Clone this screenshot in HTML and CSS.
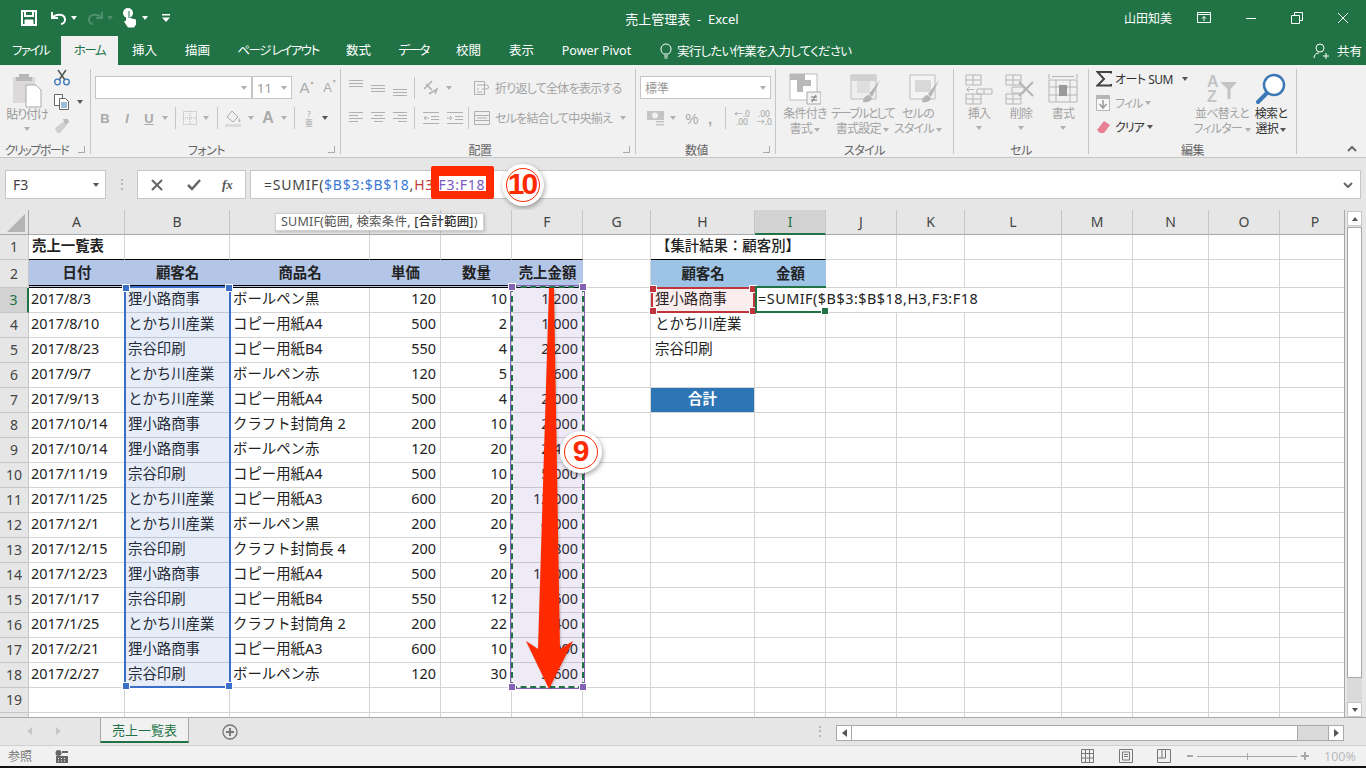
FILE: index.html
```html
<!DOCTYPE html>
<html lang="ja">
<head>
	<title>売上管理表 - Excel</title>
	<meta charset="utf-8">
	<link rel="stylesheet" href="styles.css">
</head>
<body>

	<div class="titlebar">
		<div class="quick">
			<svg class="q-save" width="18" height="18" viewBox="0 0 18 18" fill="none" stroke="#fff" stroke-width="2"><path d="M2 2h14v14H2z"/><path d="M5 2v5h8V2"/><path d="M5 16v-5h8v5" fill="#fff" stroke-width="1"/></svg>
			<svg class="q-undo" width="18" height="18" viewBox="0 0 18 18" fill="none" stroke="#fff" stroke-width="2"><path d="M2 3v6h6"/><path d="M2 9c3-4 12-5 13 1 .5 3-2 5-4 5"/></svg>
			<i class="caret white"></i>
			<svg class="q-redo" width="18" height="18" viewBox="0 0 18 18" fill="none" stroke="#4f8f6d" stroke-width="2"><path d="M16 3v6h-6"/><path d="M16 9c-3-4-12-5-13 1-.5 3 2 5 4 5"/></svg>
			<i class="caret dim"></i>
			<svg class="q-touch" width="18" height="20" viewBox="0 0 18 20" fill="#fff"><circle cx="7" cy="5" r="5"/><path d="M5 4h4v6l6 1.500v5l-2 3H7l-4-6 2-1z"/><path d="M8 3v7" stroke="#217346"/></svg>
			<i class="caret white"></i>
			<svg class="q-more" width="10" height="10" viewBox="0 0 10 10" fill="#fff"><path d="M1 1h8v1.500H1zM1 4.500h8L5 9z"/></svg>
		</div>
		<div class="doc-title">売上管理表&nbsp; - &nbsp;Excel</div>
		<div class="win">
			<span class="user">山田知美</span>
			<svg class="w-disp" width="14" height="12" viewBox="0 0 14 12" fill="none" stroke="#fff"><path d="M.5.500h13v10H.5zM.5 2.500h13M7 9V4.500M5 6.500l2-2 2 2"/></svg>
			<svg class="w-min" width="12" height="12" viewBox="0 0 12 12" stroke="#fff"><path d="M1 6.500h10"/></svg>
			<svg class="w-max" width="12" height="12" viewBox="0 0 12 12" fill="none" stroke="#fff"><path d="M.5 3.500h8v8h-8zM3.500 3.500v-3h8v8h-3"/></svg>
			<svg class="w-close" width="12" height="12" viewBox="0 0 12 12" stroke="#fff"><path d="M1 1l10 10M11 1L1 11"/></svg>
		</div>
	</div>

	<div class="tabs">
		<span class="kana">ファイル</span>
		<span class="kana active">ホーム</span>
		<span>挿入</span>
		<span>描画</span>
		<span class="kana">ページ レイアウト</span>
		<span>数式</span>
		<span class="kana">データ</span>
		<span>校閲</span>
		<span>表示</span>
		<span>Power Pivot</span>
		<div class="tell">
			<svg width="14" height="16" viewBox="0 0 14 16" fill="none" stroke="#fff"><path d="M4.500 11C3 9.500 2 8.500 2 6a5 5 0 0 1 10 0c0 2.500-1 3.500-2.500 5zM5 13h4M5.500 15h3"/></svg>
			<span>実行したい作業を入力してください</span>
		</div>
		<div class="share">
			<svg width="16" height="16" viewBox="0 0 16 16" fill="none" stroke="#fff"><circle cx="7" cy="5" r="4"/><path d="M1 15c0-3 2-5 5-5M10 13h6M13 10v6"/></svg>
			共有
		</div>
	</div>

	<div class="ribbon">

		<div class="group g-clip">
			<div class="body">
				<div class="big paste">
					<svg width="30" height="36" viewBox="0 0 30 36"><path d="M1 5h22v26H1z" fill="#dcd9da"/><path d="M7 5V2h10v3h3v4H4V5z" fill="#b9b6b7"/><path d="M14 13h10l5 5v17H14z" fill="#fff" stroke="#a9a9a9"/></svg>
					<span>貼り付け</span>
					<i class="caret"></i>
				</div>
				<div class="clip-tools">
					<svg width="16" height="17" viewBox="0 0 16 17" fill="none"><path d="M4 1l7 10M12 1L5 11" stroke="#555" stroke-width="1.500"/><circle cx="3.500" cy="13" r="2.800" stroke="#3c78b5" stroke-width="1.300"/><circle cx="12.500" cy="13" r="2.800" stroke="#3c78b5" stroke-width="1.300"/></svg>
					<div class="row-mini">
						<svg width="16" height="16" viewBox="0 0 16 16" fill="#fff" stroke="#666"><path d="M.5.500h8v11h-8z"/><path d="M5.500 4.500h6l3 3v8h-9z"/><path d="M7 9h6M7 11h6M7 13h6" stroke="#3c78b5"/></svg>
						<i class="caret dark"></i>
					</div>
					<svg width="16" height="15" viewBox="0 0 16 15"><path d="M9 1l5 0 1 3-4 4z" fill="#bdbdbd"/><path d="M1 10l8-6 3 4-6 7H3z" fill="#cfcfcf"/></svg>
				</div>
			</div>
			<div class="label"><b>クリップボード</b><i class="launch"></i></div>
		</div>

		<div class="group g-font">
			<div class="body">
				<div class="tool-row">
					<div class="combo font-name"><i class="caret"></i></div>
					<div class="combo font-size">11<i class="caret"></i></div>
					<span class="glyph a-big">A<sup>▲</sup></span>
					<span class="glyph a-small">A<sup>▼</sup></span>
				</div>
				<div class="tool-row row-two">
					<span class="glyph b">B</span>
					<span class="glyph i">I</span>
					<span class="glyph u">U</span>
					<i class="caret"></i>
					<i class="vsep"></i>
					<svg width="14" height="14" viewBox="0 0 14 14" fill="none" stroke="#b5b5b5" stroke-dasharray="1 1"><path d="M.5.500h13v13H.5zM7 0v14M0 7h14"/></svg>
					<i class="caret"></i>
					<i class="vsep"></i>
					<svg width="17" height="17" viewBox="0 0 17 17"><path d="M7 1l6 6-5 5-6-5z" fill="none" stroke="#aaa"/><path d="M14 8c1 2 2 3 1 4s-2-1-1-4z" fill="#b5b5b5"/><path d="M0 14h16v3H0z" fill="#dcdcdc"/></svg>
					<i class="caret"></i>
					<span class="glyph a-color">A</span>
					<i class="caret"></i>
					<i class="vsep"></i>
					<span class="furi">ｱ<br>亜</span>
					<i class="caret dark"></i>
				</div>
			</div>
			<div class="label"><b>フォント</b><i class="launch"></i></div>
		</div>

		<div class="group g-align">
			<div class="body">
				<div class="tool-row">
					<svg class="al" width="14" height="18" viewBox="0 0 14 18" stroke="#b0b0b0"><path d="M0 1.500h14M0 4.500h14M0 7.500h14"/></svg>
					<svg class="al" width="14" height="18" viewBox="0 0 14 18" stroke="#b0b0b0"><path d="M0 6.500h14M0 9.500h14M0 12.500h14"/></svg>
					<svg class="al" width="14" height="18" viewBox="0 0 14 18" stroke="#b0b0b0"><path d="M0 10.500h14M0 13.500h14M0 16.500h14"/></svg>
					<i class="vsep"></i>
					<svg class="al" width="18" height="16" viewBox="0 0 18 16" fill="none" stroke="#b0b0b0" stroke-width="1.500"><path d="M1 9l8-8M6 14l8-5-2 5"/><path d="M3 4l6 6"/></svg>
					<i class="caret"></i>
					<svg class="wrap-ic" width="16" height="14" viewBox="0 0 16 14" fill="none" stroke="#b0b0b0"><path d="M.5.500h10v13H.5zM3 4h10c2 0 2 4 0 4H8M3 8h2M3 11h5"/></svg>
					<span class="t">折り返して全体を表示する</span>
				</div>
				<div class="tool-row row-two">
					<svg class="al" width="14" height="14" viewBox="0 0 14 14" stroke="#b0b0b0"><path d="M0 1.500h14M0 4.500h9M0 7.500h14M0 10.500h9"/></svg>
					<svg class="al" width="14" height="14" viewBox="0 0 14 14" stroke="#b0b0b0"><path d="M0 1.500h14M3 4.500h9M0 7.500h14M3 10.500h9"/></svg>
					<svg class="al" width="14" height="14" viewBox="0 0 14 14" stroke="#b0b0b0"><path d="M0 1.500h14M5 4.500h9M0 7.500h14M5 10.500h9"/></svg>
					<i class="vsep"></i>
					<svg class="al" width="16" height="14" viewBox="0 0 16 14" fill="none" stroke="#b0b0b0"><path d="M0 1.500h16M8 5.500h8M8 8.500h8M0 12.500h16M6 7H1M3 5L1 7l2 2"/></svg>
					<svg class="al" width="16" height="14" viewBox="0 0 16 14" fill="none" stroke="#b0b0b0"><path d="M0 1.500h16M8 5.500h8M8 8.500h8M0 12.500h16M0 7h5M3 5l2 2-2 2"/></svg>
					<i class="vsep v2"></i>
					<svg class="wrap-ic" width="16" height="14" viewBox="0 0 16 14" fill="none" stroke="#b0b0b0"><path d="M.5.500h15v13H.5zM0 4.500h16M0 9.500h16M3 7h10"/></svg>
					<span class="t">セルを結合して中央揃え</span>
					<i class="caret"></i>
				</div>
			</div>
			<div class="label"><b>配置</b><i class="launch"></i></div>
		</div>

		<div class="group g-num">
			<div class="body">
				<div class="tool-row">
					<div class="combo num-format">標準<i class="caret"></i></div>
				</div>
				<div class="tool-row row-two">
					<svg width="17" height="15" viewBox="0 0 17 15"><path d="M0 0h17v9H0z" fill="#c4c4c4"/><circle cx="8" cy="4.500" r="3" fill="#f1f1f1"/><path d="M9 10h8v1.500H9zM9 13h8v1.500H9z" fill="#c4c4c4"/></svg>
					<i class="caret"></i>
					<span class="glyph pct">%</span>
					<span class="glyph comma">,</span>
					<i class="vsep"></i>
					<span class="dec">←.0<br>.00</span>
					<span class="dec">.00<br>→.0</span>
				</div>
			</div>
			<div class="label"><b>数値</b><i class="launch"></i></div>
		</div>

		<div class="group g-style">
			<div class="body">
				<div class="big b1">
					<svg width="32" height="32" viewBox="0 0 32 32"><path d="M1 1h27v26H1z" fill="#fff" stroke="#bdbdbd"/><path d="M1 1h15v6H1zM8 7h14v6H8zM8 13h6v6H8z" fill="#b9b9b9"/><path d="M18 19h14v12H18z" fill="#f1f1f1" stroke="#aaa"/><path d="M22 24h6M22 27h6M27 22l-4 7" stroke="#777"/></svg>
					<span>条件付き<br>書式 <i class="caret"></i></span>
				</div>
				<div class="big b2">
					<svg width="32" height="32" viewBox="0 0 32 32"><path d="M1 2h25v24H1z" fill="#eee" stroke="#bdbdbd"/><path d="M1 2h25v6H1z" fill="#d0d0d0"/><path d="M7 8h13v12H7z" fill="#dedede"/><path d="M30 7L19 21l3 3zM19 22c-3 0-6 3-6 7 4 1 9-1 9-4z" fill="#b5b5b5"/></svg>
					<span><em>テーブルとして</em><br>書式設定 <i class="caret"></i></span>
				</div>
				<div class="big b3">
					<svg width="32" height="32" viewBox="0 0 32 32"><path d="M1 2h25v24H1z" fill="#f4f4f4" stroke="#bdbdbd"/><path d="M6 7h16v12H6z" fill="#d8d8d8"/><path d="M30 7L19 21l3 3zM19 22c-3 0-6 3-6 7 4 1 9-1 9-4z" fill="#b5b5b5"/></svg>
					<span>セルの<br>スタイル <i class="caret"></i></span>
				</div>
			</div>
			<div class="label"><b>スタイル</b></div>
		</div>

		<div class="group g-cell">
			<div class="body">
				<div class="big">
					<svg width="28" height="32" viewBox="0 0 28 32" fill="none" stroke="#b5b5b5"><path d="M1 2h15v10H1zM8 2v10M1 7h15M1 21h15v10H1zM8 21v10M1 26h15M12 16h15v5H12zM19 16v5M9 16.500H2M4 14l-2 2.500L4 19" /></svg>
					<span>挿入</span>
					<i class="caret"></i>
				</div>
				<div class="big">
					<svg width="32" height="32" viewBox="0 0 32 32" fill="none" stroke="#b5b5b5"><path d="M1 2h15v10H1zM8 2v10M1 7h15M1 21h15v10H1zM8 21v10M1 26h15M7 14h12v6H7z"/><path d="M14 9l14 14M28 9L14 23" stroke-width="2"/></svg>
					<span>削除</span>
					<i class="caret"></i>
				</div>
				<div class="big">
					<svg width="30" height="32" viewBox="0 0 30 32" fill="none" stroke="#b5b5b5"><path d="M1 7h28v22H1zM8 7v22M22 7v22M1 14h28M1 22h28M1 1v5M29 1v5M4 3.500h22"/><path d="M11 12h8v11h-8z" fill="#999" stroke="none"/></svg>
					<span>書式</span>
					<i class="caret"></i>
				</div>
			</div>
			<div class="label"><b>セル</b></div>
		</div>

		<div class="group g-edit">
			<div class="body">
				<div class="edit-col">
					<div class="edit-row dark">
						<svg width="16" height="16" viewBox="0 0 16 16" fill="none" stroke="#444" stroke-width="2"><path d="M15 2.500V1H1.500L8 8l-6.500 6.500H15V13"/></svg>
						<span class="sum">オート SUM</span>
						<i class="caret dark"></i>
					</div>
					<div class="edit-row">
						<svg width="14" height="16" viewBox="0 0 14 16"><path d="M.5.500h13v15H.5z" fill="#f8f8f8" stroke="#b5b5b5"/><path d="M1 1h12v3H1z" fill="#b5b5b5"/><path d="M7 5v8M3.500 9L7 13l3.500-4" fill="none" stroke="#999" stroke-width="1.500"/></svg>
						<span>フィル</span>
						<i class="caret"></i>
					</div>
					<div class="edit-row dark">
						<svg width="14" height="14" viewBox="0 0 14 14"><path d="M8 1l6 4-6 8H4L1 10z" fill="#e87f93"/></svg>
						<span>クリア</span>
						<i class="caret dark"></i>
					</div>
				</div>
				<div class="big sort">
					<svg width="32" height="32" viewBox="0 0 32 32"><text x="1" y="14" class="az">A</text><text x="1" y="29" class="az">Z</text><path d="M14 9h17l-6.500 7v10h-3V16z" fill="#c4c4c4"/></svg>
					<span>並べ替えと<br>フィルター <i class="caret"></i></span>
				</div>
				<div class="big find">
					<svg width="32" height="32" viewBox="0 0 32 32" fill="none"><circle cx="19" cy="12" r="10" fill="#fff" stroke="#3c78b5" stroke-width="2.500"/><path d="M12 20L3 29" stroke="#3c78b5" stroke-width="4" stroke-linecap="round"/></svg>
					<span>検索と<br>選択 <i class="caret dark"></i></span>
				</div>
			</div>
			<div class="label"><b>編集</b></div>
		</div>

		<div class="collapse">
			<svg width="10" height="6" viewBox="0 0 10 6" fill="none" stroke="#666" stroke-width="2"><path d="M1 5l4-4 4 4"/></svg>
		</div>
	</div>

	<div class="fbar">
		<div class="namebox">F3<i class="caret dark"></i></div>
		<div class="fdots">⋮</div>
		<div class="fbuttons">
			<svg width="12" height="12" viewBox="0 0 12 12" stroke="#666" stroke-width="2"><path d="M1 1l10 10M11 1L1 11"/></svg>
			<svg width="14" height="12" viewBox="0 0 14 12" fill="none" stroke="#666" stroke-width="2.500"><path d="M1 6l4 4 8-9"/></svg>
			<span class="fx">fx</span>
		</div>
		<div class="finput">
			<span class="ftext">=SUMIF(<span class="c-blue">$B$3:$B$18</span>,<span class="c-red">H3</span>,<span class="c-purple">F3:F18</span></span>
			<svg width="10" height="6" viewBox="0 0 10 6" fill="none" stroke="#666" stroke-width="2"><path d="M1 1l4 4 4-4"/></svg>
		</div>
		<div class="red-box"></div>
		<div class="badge badge-10"><span>10</span></div>
	</div>

	<div class="sheet">
		<div class="grid-wrap">
			<table class="cells">
				<colgroup>
					<col class="c-head"><col class="c-a"><col class="c-b"><col class="c-c"><col class="c-n"><col class="c-n"><col class="c-n"><col class="c-g"><col class="c-h"><col class="c-n"><col class="c-n"><col class="c-k"><col class="c-l"><col class="c-n"><col class="c-m"><col class="c-n"><col class="c-n">
				</colgroup>
				<tr class="head">
					<th class="corner"><svg width="20" height="20" viewBox="0 0 20 20"><path d="M19 1v18H1z" fill="#b4b4b4"/></svg></th>
					<th>A</th><th>B</th><th>C</th><th>D</th><th>E</th><th>F</th><th>G</th><th>H</th><th class="on">I</th><th>J</th><th>K</th><th>L</th><th>M</th><th>N</th><th>O</th><th>P</th>
				</tr>
				<tr>
					<th>1</th><td class="bold over">売上一覧表</td><td class="over"></td><td class="over"></td><td class="over"></td><td class="over"></td><td class="over"></td><td></td><td colspan="2" class="bold over title2">【集計結果：顧客別】</td><td></td><td></td><td></td><td></td><td></td><td></td><td></td>
				</tr>
				<tr class="r2">
					<th>2</th><td class="hd">日付</td><td class="hd">顧客名</td><td class="hd">商品名</td><td class="hd">単価</td><td class="hd">数量</td><td class="hd">売上金額</td><td class="plain"></td><td class="hd2">顧客名</td><td class="hd2">金額</td><td></td><td></td><td></td><td></td><td></td><td></td><td></td>
				</tr>
				<tr>
					<th class="on">3</th><td>2017/8/3</td><td>狸小路商事</td><td>ボールペン黒</td><td class="n">120</td><td class="n">10</td><td class="n">1,200</td><td></td><td>狸小路商事</td><td colspan="4" class="formula">=SUMIF($B$3:$B$18,H3,F3:F18</td><td></td><td></td><td></td><td></td>
				</tr>
				<tr>
					<th>4</th><td>2017/8/10</td><td>とかち川産業</td><td>コピー用紙A4</td><td class="n">500</td><td class="n">2</td><td class="n">1,000</td><td></td><td>とかち川産業</td><td></td><td></td><td></td><td></td><td></td><td></td><td></td><td></td>
				</tr>
				<tr>
					<th>5</th><td>2017/8/23</td><td>宗谷印刷</td><td>コピー用紙B4</td><td class="n">550</td><td class="n">4</td><td class="n">2,200</td><td></td><td>宗谷印刷</td><td></td><td></td><td></td><td></td><td></td><td></td><td></td><td></td>
				</tr>
				<tr>
					<th>6</th><td>2017/9/7</td><td>とかち川産業</td><td>ボールペン赤</td><td class="n">120</td><td class="n">5</td><td class="n">600</td><td></td><td></td><td></td><td></td><td></td><td></td><td></td><td></td><td></td><td></td>
				</tr>
				<tr>
					<th>7</th><td>2017/9/13</td><td>とかち川産業</td><td>コピー用紙A4</td><td class="n">500</td><td class="n">4</td><td class="n">2,000</td><td></td><td class="total">合計</td><td></td><td></td><td></td><td></td><td></td><td></td><td></td><td></td>
				</tr>
				<tr>
					<th>8</th><td>2017/10/14</td><td>狸小路商事</td><td>クラフト封筒角 2</td><td class="n">200</td><td class="n">10</td><td class="n">2,000</td><td></td><td></td><td></td><td></td><td></td><td></td><td></td><td></td><td></td><td></td>
				</tr>
				<tr>
					<th>9</th><td>2017/10/14</td><td>狸小路商事</td><td>ボールペン赤</td><td class="n">120</td><td class="n">20</td><td class="n">2,400</td><td></td><td></td><td></td><td></td><td></td><td></td><td></td><td></td><td></td><td></td>
				</tr>
				<tr>
					<th>10</th><td>2017/11/19</td><td>宗谷印刷</td><td>コピー用紙A4</td><td class="n">500</td><td class="n">10</td><td class="n">5,000</td><td></td><td></td><td></td><td></td><td></td><td></td><td></td><td></td><td></td><td></td>
				</tr>
				<tr>
					<th>11</th><td>2017/11/25</td><td>とかち川産業</td><td>コピー用紙A3</td><td class="n">600</td><td class="n">20</td><td class="n">12,000</td><td></td><td></td><td></td><td></td><td></td><td></td><td></td><td></td><td></td><td></td>
				</tr>
				<tr>
					<th>12</th><td>2017/12/1</td><td>とかち川産業</td><td>ボールペン黒</td><td class="n">200</td><td class="n">20</td><td class="n">4,000</td><td></td><td></td><td></td><td></td><td></td><td></td><td></td><td></td><td></td><td></td>
				</tr>
				<tr>
					<th>13</th><td>2017/12/15</td><td>宗谷印刷</td><td>クラフト封筒長 4</td><td class="n">200</td><td class="n">9</td><td class="n">1,800</td><td></td><td></td><td></td><td></td><td></td><td></td><td></td><td></td><td></td><td></td>
				</tr>
				<tr>
					<th>14</th><td>2017/12/23</td><td>狸小路商事</td><td>コピー用紙A4</td><td class="n">500</td><td class="n">20</td><td class="n">10,000</td><td></td><td></td><td></td><td></td><td></td><td></td><td></td><td></td><td></td><td></td>
				</tr>
				<tr>
					<th>15</th><td>2017/1/17</td><td>宗谷印刷</td><td>コピー用紙B4</td><td class="n">550</td><td class="n">12</td><td class="n">6,600</td><td></td><td></td><td></td><td></td><td></td><td></td><td></td><td></td><td></td><td></td>
				</tr>
				<tr>
					<th>16</th><td>2017/1/25</td><td>とかち川産業</td><td>クラフト封筒角 2</td><td class="n">200</td><td class="n">22</td><td class="n">4,400</td><td></td><td></td><td></td><td></td><td></td><td></td><td></td><td></td><td></td><td></td>
				</tr>
				<tr>
					<th>17</th><td>2017/2/21</td><td>狸小路商事</td><td>コピー用紙A3</td><td class="n">600</td><td class="n">10</td><td class="n">6,000</td><td></td><td></td><td></td><td></td><td></td><td></td><td></td><td></td><td></td><td></td>
				</tr>
				<tr>
					<th>18</th><td>2017/2/27</td><td>宗谷印刷</td><td>ボールペン赤</td><td class="n">120</td><td class="n">30</td><td class="n">3,600</td><td></td><td></td><td></td><td></td><td></td><td></td><td></td><td></td><td></td><td></td>
				</tr>
				<tr>
					<th>19</th><td></td><td></td><td></td><td></td><td></td><td></td><td></td><td></td><td></td><td></td><td></td><td></td><td></td><td></td><td></td><td></td>
				</tr>
				<tr>
					<th></th><td></td><td></td><td></td><td></td><td></td><td></td><td></td><td></td><td></td><td></td><td></td><td></td><td></td><td></td><td></td><td></td>
				</tr>
			</table>

			<div class="sel sel-b"><i class="h tl"></i><i class="h tr"></i><i class="h bl"></i><i class="h br"></i></div>
			<div class="sel sel-f"><i class="h tl"></i><i class="h tr"></i><i class="h bl"></i><i class="h br"></i></div>
			<div class="sel sel-h"><i class="h tl"></i><i class="h tr"></i><i class="h bl"></i><i class="h br"></i></div>
			<div class="sel sel-i"><i class="h br"></i></div>

			<div class="tooltip">SUMIF(範囲, 検索条件, <b>[合計範囲]</b>)</div>
			<svg class="arrow" width="60" height="410" viewBox="0 0 60 410"><path d="M23 2h5l6 361 13-8-24 48-23-48 12 8z" fill="#ff2a00"/></svg>
			<div class="badge badge-9"><span>9</span></div>
		</div>

		<div class="vscroll">
			<div class="sb-btn"><i class="caret up"></i></div>
			<div class="sb-thumb"></div>
			<div class="sb-track"></div>
			<div class="sb-btn"><i class="caret dark"></i></div>
		</div>
	</div>

	<div class="sheetbar">
		<div class="nav"><i class="tri left"></i><i class="tri right"></i></div>
		<div class="sheet-tab">売上一覧表</div>
		<svg class="add" width="16" height="16" viewBox="0 0 16 16" fill="none" stroke="#777"><circle cx="8" cy="8" r="7" stroke-width="1.300"/><path d="M8 4v8M4 8h8" stroke-width="2"/></svg>
		<div class="hdots">⋮</div>
		<div class="hscroll">
			<div class="hs-btn"><i class="tri left dark"></i></div>
			<div class="hs-thumb"></div>
			<div class="hs-track"></div>
			<div class="hs-btn"><i class="tri right dark"></i></div>
		</div>
	</div>

	<div class="status">
		<span class="st-text">参照</span>
		<svg class="st-macro" width="13" height="13" viewBox="0 0 13 13" fill="#666"><circle cx="3.500" cy="3" r="3"/><path d="M7 1h6v2H7zM1 6h12v7H1z"/><path d="M3 8h1v1H3zM6 8h1v1H6zM9 8h1v1H9zM3 10.500h1v1H3zM6 10.500h1v1H6zM9 10.500h1v1H9z" fill="#f1f1f1"/></svg>
		<div class="views">
			<svg width="14" height="14" viewBox="0 0 14 14" fill="none" stroke="#777"><path d="M.5.500h12v13H.5zM4.500 0v14M8.500 0v14M0 4.500h13M0 9h13"/></svg>
			<svg width="14" height="14" viewBox="0 0 14 14" fill="none" stroke="#777"><path d="M.5.500h13v13H.5zM3.500 3h7v8h-7zM5 5.500h4M5 7.500h4"/></svg>
			<svg width="14" height="14" viewBox="0 0 14 14" fill="none" stroke="#777"><path d="M.5.500h13v13H.5zM.5 9h8V.5M5 0v9"/></svg>
		</div>
		<div class="zoom">
			<i class="z-minus"></i>
			<div class="z-track"><i></i></div>
			<svg width="8" height="8" viewBox="0 0 8 8" stroke="#a8a8a8" stroke-width="2"><path d="M0 4h8M4 0v8"/></svg>
			<span>100%</span>
		</div>
	</div>

</body>
</html>
```

FILE: styles.css
```css
* {
	box-sizing: border-box;
}

body {
	margin: 0px;
	height: 768px;
	overflow: hidden;
	background: #111;
	font-family: "Noto Sans", "Noto Sans CJK JP", sans-serif;
	font-size: 12px;
	color: #444;
}

svg {
	display: block;
	flex: none;
}

i, em {
	font-style: normal;
}

/* little dropdown triangle used everywhere */
.caret {
	display: inline-block;
	flex: none;
	width: 0px;
	height: 0px;
	border-left: 3.500px solid transparent;
	border-right: 3.500px solid transparent;
	border-top: 4px solid #b0b0b0;
	vertical-align: middle;
}
.caret.white { border-top-color: #fff; }
.caret.dim { border-top-color: #4f8f6d; }
.caret.dark { border-top-color: #555; }
.caret.up {
	border-top: 0px;
	border-bottom: 4px solid #555;
}

/* title bar */
.titlebar {
	height: 36px;
	background: #217346;
	color: #fff;
	display: flex;
	align-items: center;
	position: relative;
}

.quick {
	display: flex;
	align-items: center;
	padding-left: 20px;
	width: 300px;
}
.q-undo { margin-left: 12px; }
.quick .caret { margin-left: 3px; }
.q-redo { margin-left: 9px; }
.q-touch { margin-left: 8px; }
.q-more { margin-left: 13px; }

.doc-title {
	flex: 1;
	text-align: center;
	font-size: 13px;
	margin-left: -2px;
}

.win {
	width: 300px;
	display: flex;
	align-items: center;
	justify-content: flex-end;
}
.user { font-size: 12px; margin-right: 25px; }
.w-disp { margin-right: 34px; }
.w-min { margin-right: 34px; }
.w-max { margin-right: 34px; }
.w-close { margin-right: 17px; }

/* ribbon tabs */
.tabs {
	height: 29px;
	background: #217346;
	color: #fff;
	display: grid;
	grid-template-columns: 61px 57px 53px 53px 108px 53px 57px 53px 53px 97px 215px 1fr auto;
	align-items: center;
	font-size: 12.500px;
	font-feature-settings: "palt";
}
.tabs > span {
	text-align: center;
	line-height: 29px;
	white-space: nowrap;
}
.tabs > span.kana {
	letter-spacing: -1.500px;
}
.tabs > span.active {
	background: #f1f1f1;
	color: #217346;
}
.tell {
	display: flex;
	align-items: center;
	gap: 4px;
	padding-left: 14px;
	white-space: nowrap;
	letter-spacing: -0.750px;
}
.share {
	grid-column: 13;
	display: flex;
	align-items: center;
	gap: 8px;
	padding-right: 4px;
}

/* ribbon */
.ribbon {
	height: 93px;
	background: #f1f1f1;
	border-bottom: 1px solid #c6c6c6;
	display: flex;
	padding-top: 4px;
	font-feature-settings: "palt";
	color: #a3a3a3;
}

.group {
	height: 85px;
	border-right: 1px solid #c6c6c6;
	display: flex;
	flex-direction: column;
}
.g-clip { width: 91px; }
.g-font { width: 250px; }
.g-align { width: 295px; }
.g-num { width: 140px; }
.g-style { width: 178px; }
.g-cell { width: 135px; }
.g-edit { width: 208px; }

.body {
	height: 72px;
	flex: none;
}

.label {
	height: 16px;
	margin-bottom: -5px;
	margin-top: 2px;
	line-height: 16px;
	text-align: center;
	position: relative;
}
.label b {
	font-weight: normal;
	color: #666;
	letter-spacing: -0.500px;
}
.g-clip .label { padding-right: 17px; }
.g-clip .label b { letter-spacing: -1.500px; }
.g-font .label { padding-right: 18px; }
.g-align .label { padding-right: 16px; }
.g-num .label { padding-right: 18px; }
.launch {
	position: absolute;
	right: 5px;
	top: 3px;
	width: 7px;
	height: 7px;
	border-right: 1px solid #aaa;
	border-bottom: 1px solid #aaa;
}

.g-font .body,
.g-align .body,
.g-num .body {
	padding-top: 7px;
	padding-left: 4px;
}

.tool-row {
	display: flex;
	align-items: center;
	height: 23px;
}
.row-two {
	height: 22px;
	margin-top: 8px;
}

.vsep {
	width: 1px;
	height: 22px;
	background: #c6c6c6;
	flex: none;
}

.combo {
	height: 23px;
	background: #fff;
	border: 1px solid #c6c6c6;
	display: flex;
	align-items: center;
	justify-content: space-between;
	padding: 0px 4px;
	color: #999;
}
.font-name { width: 157px; justify-content: flex-end; }
.font-size { width: 40px; font-size: 13px; }
.num-format { width: 131px; }

.glyph {
	font-family: "Liberation Sans", sans-serif;
	color: #aaa;
	text-align: center;
}
.a-big { font-size: 15px; margin-left: 5px; width: 20px; }
.a-small { font-size: 13px; margin-left: 3px; width: 20px; }
.glyph sup { font-size: 5px; vertical-align: 9px; line-height: 0px; }

.g-font .row-two .glyph { font-size: 13px; }
.g-font .b { font-weight: bold; width: 14px; margin-left: 3px; }
.g-font .i { font-style: italic; font-weight: bold; width: 14px; margin-left: 8px; }
.g-font .u { text-decoration: underline; font-weight: bold; width: 14px; margin-left: 8px; }
.g-font .row-two .caret { margin-left: 6px; }
.g-font .row-two .vsep { margin: 0px 7px; }
.g-font .row-two svg + .caret { margin-left: 6px; margin-right: 1px; }
.g-font .row-two .a-color { font-size: 16px; margin-left: 6px; width: 14px; font-weight: bold; }
.furi {
	font-size: 8px;
	line-height: 9px;
	text-align: center;
	width: 14px;
}

.g-align .body { padding-left: 8px; }
.g-align .al { margin-right: 8px; }
.g-align .vsep { margin-right: 8px; margin-left: -1px; }
.g-align .vsep.v2 { margin-left: -3px; }
.g-align .t { margin-left: 5px; white-space: nowrap; letter-spacing: -0.750px; }
.g-align .caret { margin-left: 3px; }
.g-align .row-two .caret { margin-left: 8px; }
.g-align .wrap-ic { margin-left: 22px; }
.g-align .row-two .wrap-ic { margin-left: -3px; }
.g-align .tool-row .al + .caret { margin-left: -3px; }

.g-num .row-two { padding-left: 7px; }
.g-num .row-two .caret { margin-left: 6px; }
.pct { font-size: 15px; margin-left: 8px; width: 16px; }
.comma { font-size: 15px; font-weight: bold; margin-left: 5px; width: 10px; margin-right: 10px; }
.dec {
	font-size: 8.500px;
	line-height: 8px;
	width: 22px;
	text-align: center;
	margin-left: 5px;
	white-space: nowrap;
}
.dec + .dec { margin-left: 0px; }

/* big buttons, icon with the text below */
.big {
	display: flex;
	flex-direction: column;
	align-items: center;
	padding-top: 4px;
	text-align: center;
	line-height: 15px;
	white-space: nowrap;
	letter-spacing: -0.750px;
}
.big svg { height: 32px; margin-bottom: 1px; }
.big > span { display: block; }
.big > .caret { margin-top: 5px; }
.big em { letter-spacing: -1.700px; }

.g-clip .body { display: flex; }
.paste { width: 54px; padding-top: 3px; }
.paste svg { height: 36px; margin-bottom: -1px; }
.paste > span { color: #999; letter-spacing: -1px; }
.clip-tools {
	display: flex;
	flex-direction: column;
	padding-top: 0px;
	gap: 8px;
}
.row-mini {
	display: flex;
	align-items: center;
	gap: 7px;
}

.g-style .body,
.g-cell .body,
.g-edit .body { display: flex; }
.g-style .body { padding-left: 2px; }
.b1 { width: 54px; }
.b2 { width: 56px; padding-left: 5px; }
.b3 { width: 60px; }
.b2 svg { margin-left: 6px; }
.b3 svg { margin-left: 14px; }
.g-cell .body { padding-left: 4px; }
.g-cell .big { width: 42px; }

.edit-col {
	width: 109px;
	padding-left: 7px;
	margin-top: -2px;
	letter-spacing: -1px;
}
.edit-row {
	display: flex;
	align-items: center;
	height: 24px;
	gap: 3px;
}
.edit-row svg { margin-right: 2px; }
.edit-row:first-child svg { margin-right: 0px; }
.edit-row.dark { color: #333; }
.sum { margin-right: 6px; letter-spacing: -0.500px; }
.sort { width: 48px; }
.find { width: 50px; color: #333; }
.az {
	font-family: "Liberation Sans", sans-serif;
	font-size: 16px;
	font-weight: bold;
	fill: #c4c4c4;
}

.collapse {
	margin-left: auto;
	align-self: flex-end;
	padding-right: 9px;
	padding-bottom: 5px;
}

/* formula bar */
.fbar {
	height: 52px;
	background: #e6e6e6;
	display: flex;
	padding-top: 12px;
	padding-left: 5px;
	position: relative;
}
.fbar > div { height: 29px; }

.namebox {
	width: 101px;
	background: #fff;
	border: 1px solid #c6c6c6;
	display: flex;
	align-items: center;
	justify-content: space-between;
	padding: 0px 6px 0px 7px;
	font-size: 14px;
	color: #444;
}
.fdots {
	width: 31px;
	text-align: center;
	line-height: 28px;
	color: #aaa;
	font-size: 14px;
}
.fbuttons {
	width: 109px;
	background: #fff;
	border: 1px solid #c6c6c6;
	display: flex;
	align-items: center;
	gap: 24px;
	padding-left: 13px;
}
.fx {
	font-family: "Liberation Serif", serif;
	font-style: italic;
	font-weight: bold;
	font-size: 13px;
	color: #555;
	margin-left: -3px;
}
.finput {
	width: 1111px;
	margin-left: 4px;
	background: #fff;
	border: 1px solid #c6c6c6;
	display: flex;
	align-items: center;
	justify-content: space-between;
	padding: 0px 7px 0px 13px;
	font-size: 14px;
	color: #444;
	white-space: nowrap;
}
.ftext { letter-spacing: 0.750px; }
.c-blue { color: #3b78d8; }
.c-red { color: #c23b3b; }
.c-purple { color: #7e57c2; }

.red-box {
	position: absolute;
	left: 431px;
	top: 8px;
	width: 63px;
	height: 33px !important;
	border: solid #ff2a00;
	border-width: 10px 8px 8px 8px;
	border-radius: 2px;
}

.badge {
	position: absolute;
	width: 42px;
	height: 42px !important;
	border-radius: 50%;
	background: #fff;
	box-shadow: 1px 2px 5px rgba(0,0,0,0.35);
	display: flex;
	align-items: center;
	justify-content: center;
}
.badge span {
	width: 34px;
	height: 34px;
	border-radius: 50%;
	border: 1.500px solid #ff2a00;
	color: #ff2a00;
	font-family: "Liberation Sans", sans-serif;
	font-weight: bold;
	text-align: center;
	font-size: 30px;
	line-height: 30px;
}
.badge-10 { left: 502px; top: 6px; }
.badge-10 span { letter-spacing: -3px; padding-right: 3px; }
.badge-9 { left: 560px; top: 221px; }

/* the sheet */
.sheet {
	height: 507px;
	display: flex;
	background: #e6e6e6;
}

.grid-wrap {
	width: 1345px;
	height: 507px;
	overflow: hidden;
	position: relative;
	background: #fff;
	border-right: 1px solid #a8a8a8;
}

.cells {
	table-layout: fixed;
	width: 1351px;
	border-collapse: separate;
	border-spacing: 0px;
	font-size: 14.400px;
	color: #222;
}
.c-head { width: 29px; }
.c-a { width: 96px; }
.c-b { width: 105px; }
.c-c { width: 140px; }
.c-n { width: 71px; }
.c-g { width: 68px; }
.c-h { width: 104px; }
.c-k { width: 68px; }
.c-l { width: 97px; }
.c-m { width: 76px; }

.cells tr { height: 25px; }
.cells tr.r2 { height: 28px; }

.cells td, .cells th {
	white-space: nowrap;
	border-right: 1px solid #d4d4d4;
	border-bottom: 1px solid #d4d4d4;
	line-height: 20px;
	overflow: visible;
}
.cells td {
	padding: 0px 4px 3px 3px;
}
.cells td:nth-child(2) { padding-left: 2px; }
.cells td:nth-child(9) { padding-left: 4px; }
.cells th {
	background: #e6e6e6;
	font-weight: normal;
	text-align: center;
	color: #444;
	font-size: 14px;
	padding: 0px;
	border-color: #c6c6c6;
}
.cells .head th {
	border-bottom: 1px solid #a8a8a8;
	border-right-color: #c6c6c6;
}
.cells th.corner { padding: 2px 0px 0px 6px; border-right-color: #a8a8a8; }
.cells th.on {
	background: #d2d2d2;
	color: #217346;
}
.cells .head th.on { border-bottom: 2px solid #217346; }
.cells tr > th.on:first-child { border-right: 2px solid #217346; }

.cells td.n { text-align: right; }
.cells td.bold { font-weight: bold; padding-left: 3px; }
.cells td.over { border-bottom-color: #000; }
.cells td.title2 { border-bottom-color: #000; padding-left: 5px; font-weight: 500; }

.cells td.hd, .cells td.hd2 {
	background: #b4c6e7;
	font-weight: bold;
	text-align: center;
	border-right: 0px;
	border-bottom: 3px double #000;
	padding: 0px;
}
.cells td.hd2 { background: #9dc3e6; border-bottom: 1px solid #2e6aa8; }
.cells td.plain { border-bottom-color: #d4d4d4; }
.cells td.formula { padding-left: 3px; letter-spacing: 0.500px; }
.cells td.total {
	background: #2e75b6;
	color: #fff;
	font-weight: bold;
	text-align: center;
	padding: 0px 0px 3px 0px;
}

/* range outlines, they sit on top of the table */
.sel {
	position: absolute;
}
.sel .h {
	position: absolute;
	width: 8px;
	height: 8px;
	border: 1px solid #fff;
}
.sel .tl { left: -4px; top: -4px; }
.sel .tr { right: -4px; top: -4px; }
.sel .bl { left: -4px; bottom: -4px; }
.sel .br { right: -4px; bottom: -4px; }

.sel-b {
	left: 124px;
	top: 76px;
	width: 107px;
	height: 402px;
	border: 2px solid #3a6fc9;
	background: rgba(58,111,201,0.13);
}
.sel-b .h { background: #3a6fc9; }

.sel-f {
	left: 511px;
	top: 76px;
	width: 73px;
	height: 402px;
	border: 2px dashed #217346;
	outline: 1px solid #8461b7;
	background: rgba(132,97,183,0.13);
	background-clip: padding-box;
}
.sel-f .h { background: #8461b7; }
.sel-f .tl { left: -5px; top: -5px; }
.sel-f .tr { right: -5px; top: -5px; }
.sel-f .bl { left: -5px; bottom: -5px; }
.sel-f .br { right: -5px; bottom: -5px; }

.sel-h {
	left: 651px;
	top: 77px;
	width: 104px;
	height: 26px;
	border: 2px solid #c0343c;
	background: rgba(192,52,60,0.09);
}
.sel-h .h { background: #c0343c; }

.sel-i {
	left: 755px;
	top: 76px;
	width: 71px;
	height: 27px;
	border: 2px solid #217346;
	border-right: 0px;
}
.sel-i .h { background: #217346; right: -3px; bottom: -4px; }

.tooltip {
	position: absolute;
	left: 275px;
	top: 3px;
	width: 209px;
	height: 18px;
	background: #fff;
	border: 1px solid #d0d0d0;
	box-shadow: 1px 1px 3px rgba(0,0,0,0.2);
	font-size: 12.500px;
	letter-spacing: 0.200px;
	line-height: 15px;
	padding-left: 5px;
	color: #555;
	white-space: nowrap;
}
.tooltip b { color: #333; font-weight: 500; }

.arrow {
	position: absolute;
	left: 526px;
	top: 76px;
	filter: drop-shadow(1px 1px 1px rgba(0,0,0,0.2));
}

.vscroll {
	flex: 1;
	padding: 1px 4px 0px 2px;
	display: flex;
	flex-direction: column;
}
.sb-btn {
	height: 15px;
	background: #fff;
	border: 1px solid #c6c6c6;
	display: flex;
	align-items: center;
	justify-content: center;
	flex: none;
}
.sb-thumb {
	height: 451px;
	margin-top: 1px;
	background: #fff;
	border: 1px solid #a8a8a8;
}
.sb-track {
	flex: 1;
	background: #dadada;
}

/* sheet tabs and the horizontal scroll bar */
.sheetbar {
	height: 28px;
	background: #e6e6e6;
	border-top: 1px solid #a8a8a8;
	display: flex;
	align-items: flex-start;
	position: relative;
}

.tri {
	display: inline-block;
	width: 0px;
	height: 0px;
	border-top: 4px solid transparent;
	border-bottom: 4px solid transparent;
}
.tri.left { border-right: 5px solid #c6c6c6; }
.tri.right { border-left: 5px solid #c6c6c6; }
.tri.left.dark { border-right-color: #555; }
.tri.right.dark { border-left-color: #555; }

.nav {
	width: 100px;
	display: flex;
	gap: 24px;
	padding: 9px 0px 0px 27px;
}
.sheet-tab {
	width: 89px;
	height: 25px;
	background: #f1f1f1;
	border: 1px solid #a8a8a8;
	border-top: 0px;
	border-bottom: 2px solid #217346;
	text-align: center;
	color: #217346;
	font-size: 13px;
	line-height: 24px;
	font-feature-settings: "palt";
}
.add {
	margin: 6px 0px 0px 33px;
}
.hdots {
	margin-left: 574px;
	color: #aaa;
	font-size: 14px;
	line-height: 26px;
	width: 16px;
	text-align: center;
}
.hscroll {
	width: 508px;
	height: 16px;
	margin: 7px 0px 0px 8px;
	display: flex;
	background: #dadada;
	border: 1px solid #a8a8a8;
}
.hs-btn {
	width: 14px;
	background: #fff;
	display: flex;
	align-items: center;
	justify-content: center;
	flex: none;
}
.hs-thumb {
	width: 447px;
	background: #fff;
	border-left: 1px solid #a8a8a8;
	border-right: 1px solid #a8a8a8;
}
.hs-track { flex: 1; border-right: 1px solid #a8a8a8; }

/* status bar */
.status {
	height: 21px;
	background: #f1f1f1;
	border-top: 1px solid #d0d0d0;
	display: flex;
	align-items: center;
	font-feature-settings: "palt";
}
.st-text { margin-left: 8px; color: #777; }
.st-macro { margin-left: 23px; }
.views {
	margin-left: 1013px;
	display: flex;
	gap: 24px;
}
.zoom {
	display: flex;
	align-items: center;
	margin-left: 16px;
	color: #bbb;
}
.z-minus {
	width: 6px;
	height: 2px;
	background: #a8a8a8;
}
.z-track {
	width: 100px;
	height: 1px;
	background: #a8a8a8;
	margin: 0px 4px;
	position: relative;
}
.z-track i {
	position: absolute;
	left: 50px;
	top: -3px;
	width: 1px;
	height: 7px;
	background: #a8a8a8;
}
.zoom span {
	margin-left: 15px;
	font-size: 12.500px;
}
```
